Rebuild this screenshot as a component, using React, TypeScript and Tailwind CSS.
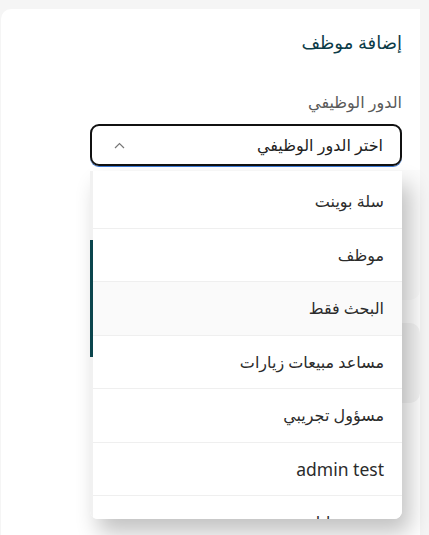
import React from "react";

const items = [
  "سلة بوينت",
  "موظف",
  "البحث فقط",
  "مساعد مبيعات زيارات",
  "مسؤول تجريبي",
  "admin test",
  "مدير عمليات",
];

export default function App() {
  return (
    <div
      dir="rtl"
      className="w-[429px] h-[535px] overflow-hidden bg-[#f5f5f5] pt-[9px]"
      style={{ fontFamily: '"Noto Sans", "DejaVu Sans", sans-serif' }}
    >
      <div className="relative mr-[9px] ml-[1px] h-[560px] rounded-tl-[10px] bg-white px-[18px]">
        <h2 className="pt-[19px] text-[18px] leading-[28px] font-medium text-[#0c3c48]">إضافة موظف</h2>
        <div className="mt-[34px] text-[16px] leading-[24px] text-[#5a5a5a]">الدور الوظيفي</div>
        <div className="relative mt-[10px] w-[312px]">
          <div className="flex h-[42px] items-center justify-between rounded-[9px] border-2 border-[#111] px-[17px] shadow-[0_1px_0_#3d7ad6]">
            <span className="text-[16px] text-[#222]">اختر الدور الوظيفي</span>
            <svg width="11" height="7" viewBox="0 0 11 7" className="ml-[5px]">
              <path d="M1 6 L5.5 1.5 L10 6" fill="none" stroke="#777" strokeWidth="1.2" />
            </svg>
          </div>
          <div className="absolute top-[47px] right-0 z-10 flex h-[348px] w-[312px] overflow-hidden rounded-b-[8px] bg-white shadow-[8px_14px_22px_rgba(0,0,0,0.24)]">
            <div className="flex-1 pt-[4px]">
              {items.map((t, i) => (
                <div
                  key={t}
                  className={
                    "flex h-[53.5px] items-center border-b border-[#efefef] pr-[18px] text-[#2b2b2b] " +
                    (i === 5 ? "text-[17.5px] " : "text-[16px] ") +
                    (i === 2 ? "bg-[#fafafa]" : "bg-white")
                  }
                >
                  {t}
                </div>
              ))}
            </div>
            <div className="relative w-[3px] bg-[#f1f1f1]">
              <div className="absolute top-[69px] h-[117px] w-[3px] bg-[#0b454d]" />
            </div>
          </div>
        </div>
        <div className="-mr-[18px] mt-[4px] h-[130px] w-[300px] rounded-b-[10px] bg-[#fbfbfb]" />
        <div className="-mr-[18px] mt-[23px] h-[80px] w-[300px] rounded-[10px] bg-[#f5f5f5]" />
      </div>
    </div>
  );
}
